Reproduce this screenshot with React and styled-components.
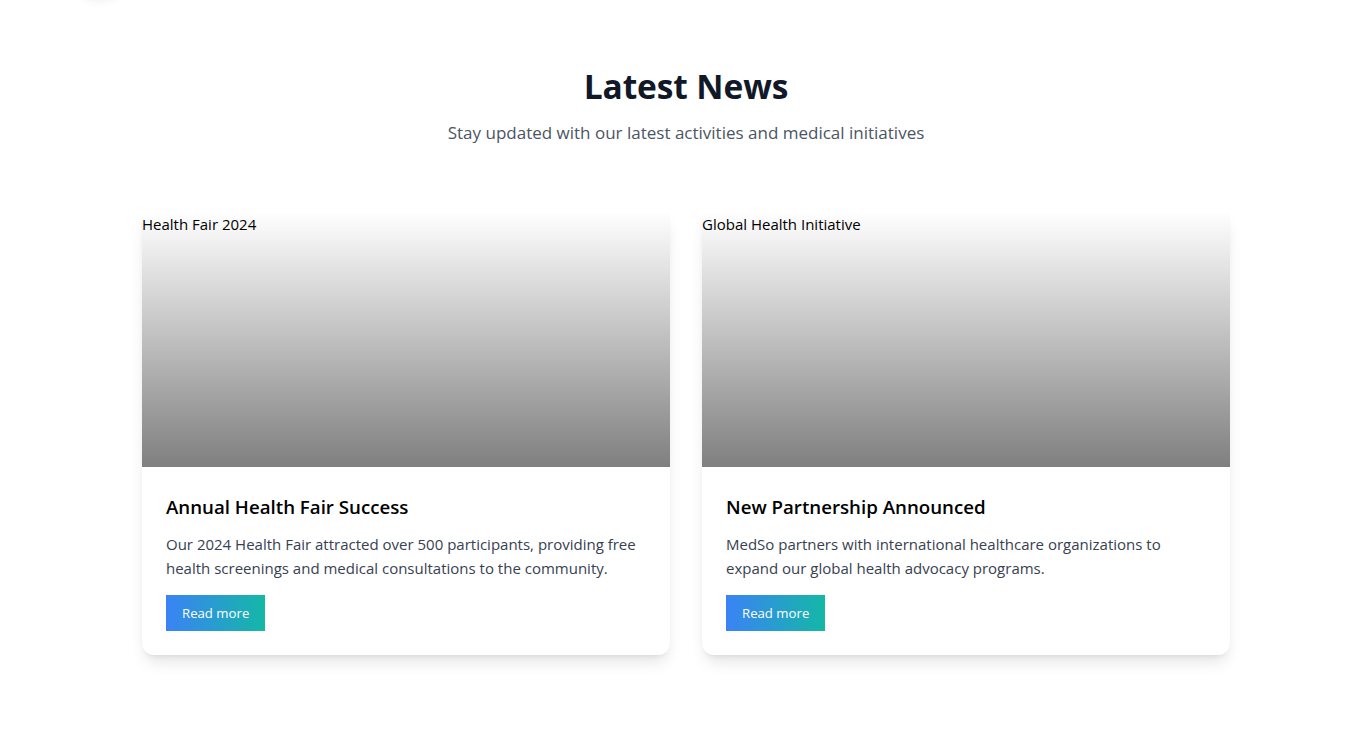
import React from "react";
import styled, { createGlobalStyle } from "styled-components";

const Global = createGlobalStyle`
  html, body { margin: 0; padding: 0; background: #ffffff; }
  body { font-family: "Open Sans", "Noto Sans", sans-serif; color: #000; }
  * { box-sizing: border-box; }
`;

const Page = styled.div`
  position: relative;
  min-height: 729px;
  overflow: hidden;
  background: #fff;
`;

const TopBlob = styled.div`
  position: absolute;
  left: 72px;
  top: -56px;
  width: 56px;
  height: 56px;
  border-radius: 50%;
  background: #fff;
  box-shadow: 0 2px 8px rgba(0, 0, 0, 0.06);
`;

const Section = styled.section`
  padding: 66px 0 64px 9px;
`;

const Container = styled.div`
  width: 1088px;
  margin: 0 auto;
`;

const Header = styled.header`
  text-align: center;
  margin-bottom: 63px;
`;

const Title = styled.h2`
  margin: 0 0 14px;
  font-size: 33.5px;
  line-height: 40px;
  font-weight: 700;
  letter-spacing: -0.1px;
  color: #111827;
`;

const Subtitle = styled.p`
  margin: 0;
  font-size: 17px;
  line-height: 26px;
  padding-bottom: 2px;
  color: #4b5563;
`;

const Grid = styled.div`
  display: grid;
  grid-template-columns: 1fr 1fr;
  gap: 32px;
`;

const Card = styled.article`
  background: #fff;
  border-radius: 12px;
  box-shadow: 0 10px 15px -3px rgba(0, 0, 0, 0.1), 0 4px 6px -4px rgba(0, 0, 0, 0.1);
`;

const Media = styled.div`
  height: 256px;
  font-size: 15px;
  line-height: 24px;
  color: #000;
  background: linear-gradient(to bottom, rgba(0, 0, 0, 0), rgba(0, 0, 0, 0.5));
`;

const AltText = styled.span`
  display: block;
  padding-top: 1px;
`;

const Body = styled.div`
  padding: 24px;
`;

const CardTitle = styled.h3`
  margin: 1px 0 10px;
  font-size: 18.7px;
  line-height: 30px;
  font-weight: 600;
  color: #000;
`;

const Text = styled.p`
  margin: 0 0 15px;
  font-size: 15px;
  line-height: 24px;
  color: #374151;
`;

const Button = styled.button`
  display: inline-block;
  height: 36px;
  padding: 0 16px;
  border: none;
  border-radius: 0;
  font-family: inherit;
  font-size: 13.2px;
  color: #fff;
  background: linear-gradient(to right, #3b82f6, #14b8a6);
  cursor: pointer;
`;

const news = [
  {
    img: "Health Fair 2024",
    title: "Annual Health Fair Success",
    text: "Our 2024 Health Fair attracted over 500 participants, providing free health screenings and medical consultations to the community.",
  },
  {
    img: "Global Health Initiative",
    title: "New Partnership Announced",
    text: "MedSo partners with international healthcare organizations to expand our global health advocacy programs.",
  },
];

export default function App() {
  return (
    <Page>
      <Global />
      <TopBlob />
      <Section>
        <Container>
          <Header>
            <Title>Latest News</Title>
            <Subtitle>Stay updated with our latest activities and medical initiatives</Subtitle>
          </Header>
          <Grid>
            {news.map((n) => (
              <Card key={n.title}>
                <Media>
                  <AltText>{n.img}</AltText>
                </Media>
                <Body>
                  <CardTitle>{n.title}</CardTitle>
                  <Text>{n.text}</Text>
                  <Button>Read more</Button>
                </Body>
              </Card>
            ))}
          </Grid>
        </Container>
      </Section>
    </Page>
  );
}
